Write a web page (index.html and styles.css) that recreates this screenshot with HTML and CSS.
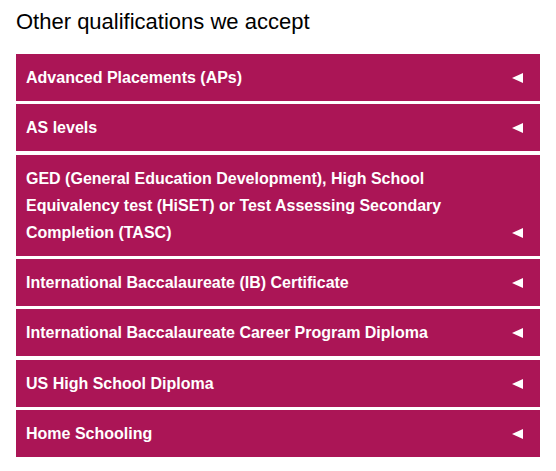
FILE: index.html
```html
<!DOCTYPE html>
<html lang="en">
  <head>
    <meta charset="UTF-8" />
    <title>Other qualifications we accept</title>
    <link rel="stylesheet" href="styles.css">
  </head>
  <body>
    <h2>Other qualifications we accept</h2>
    <div class="accordion">
      <div class="panel">
        <span class="panel-title">Advanced Placements (APs)</span>
        <span class="arrow"></span>
      </div>
      <div class="panel">
        <span class="panel-title">AS levels</span>
        <span class="arrow"></span>
      </div>
      <div class="panel">
        <span class="panel-title">GED (General Education Development), High School Equivalency test (HiSET) or Test Assessing Secondary Completion (TASC)</span>
        <span class="arrow"></span>
      </div>
      <div class="panel">
        <span class="panel-title">International Baccalaureate (IB) Certificate</span>
        <span class="arrow"></span>
      </div>
      <div class="panel">
        <span class="panel-title">International Baccalaureate Career Program Diploma</span>
        <span class="arrow"></span>
      </div>
      <div class="panel">
        <span class="panel-title">US High School Diploma</span>
        <span class="arrow"></span>
      </div>
      <div class="panel">
        <span class="panel-title">Home Schooling</span>
        <span class="arrow"></span>
      </div>
    </div>
  </body>
</html>
```

FILE: styles.css
```css
:root {
  --color-panel: #ab1556;
  --color-text: #000;
  --gap: 3.35px;
}

body {
  margin: 0;
  padding: 8px 16px 0 16px;
  font-family: "Liberation Sans", Arial, sans-serif;
  background: #fff;
  color: var(--color-text);
}

h2 {
  margin: 0 0 19px;
  font-size: 22px;
  font-weight: normal;
  line-height: 27px;
}

/* Accordion list */
.accordion {
  display: flex;
  flex-direction: column;
  gap: var(--gap);
  width: 524px;
}

.panel {
  display: flex;
  align-items: flex-end;
  justify-content: space-between;
  gap: 20px;
  padding: 10px 17px 10px 10px;
  background: var(--color-panel);
  color: #fff;
  cursor: pointer;
}

.panel-title {
  font-size: 16px;
  font-weight: bold;
  line-height: 27px;
  max-width: 440px;
}

/* Triangle pointing left */
.arrow {
  flex: none;
  width: 0;
  height: 0;
  margin-bottom: 8px;
  border-top: 5.5px solid transparent;
  border-bottom: 5.5px solid transparent;
  border-right: 11px solid #fff;
}
```
